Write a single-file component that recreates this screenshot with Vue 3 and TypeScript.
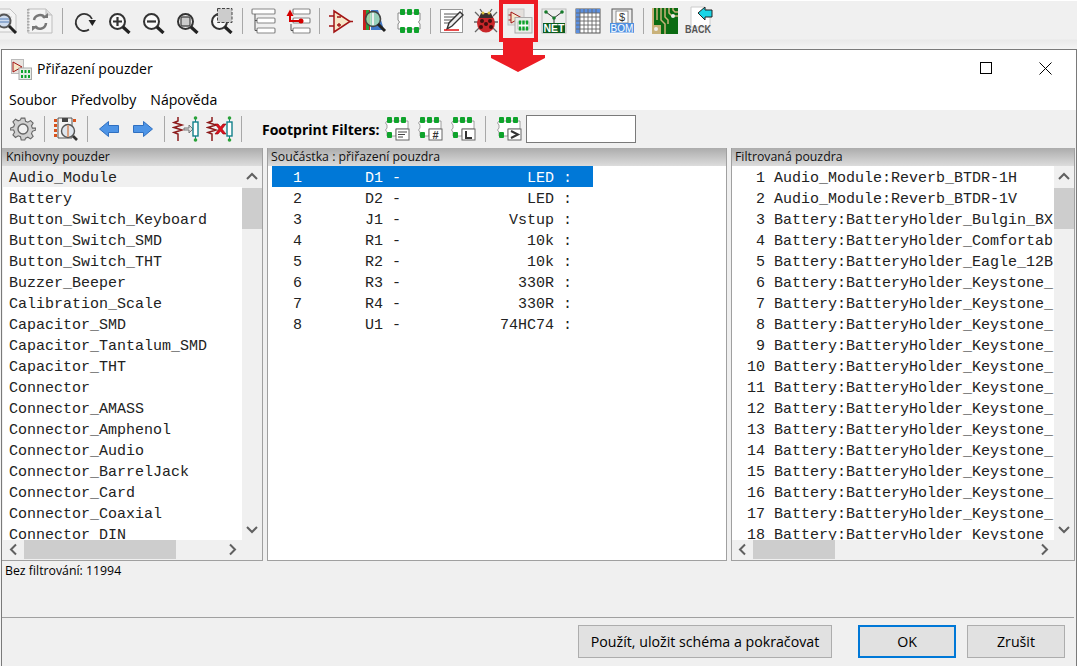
<script setup lang="ts">
const libraries = [
  'Audio_Module', 'Battery', 'Button_Switch_Keyboard', 'Button_Switch_SMD', 'Button_Switch_THT',
  'Buzzer_Beeper', 'Calibration_Scale', 'Capacitor_SMD', 'Capacitor_Tantalum_SMD', 'Capacitor_THT',
  'Connector', 'Connector_AMASS', 'Connector_Amphenol', 'Connector_Audio', 'Connector_BarrelJack',
  'Connector_Card', 'Connector_Coaxial', 'Connector_DIN',
];

const parts = [
  ['D1', 'LED'], ['D2', 'LED'], ['J1', 'Vstup'], ['R1', '10k'],
  ['R2', '10k'], ['R3', '330R'], ['R4', '330R'], ['U1', '74HC74'],
];

const partRows = parts.map(([ref, value], i) =>
  `${String(i + 1).padStart(3)}       ${ref} -${value.padStart(17)} :`);

// seznam je v okne oriznuty, nazvy jsou jen po viditelny sloupec
const footprintNames = [
  'Audio_Module:Reverb_BTDR-1H', 'Audio_Module:Reverb_BTDR-1V',
  'Battery:BatteryHolder_Bulgin_BX', 'Battery:BatteryHolder_Comfortab',
  'Battery:BatteryHolder_Eagle_12B',
  ...Array.from({ length: 13 }, () => 'Battery:BatteryHolder_Keystone_'),
];

const footprintRows = footprintNames.map((name, i) => `${String(i + 1).padStart(3)} ${name}`);
</script>

<template>
  <div class="screen">
    <!-- hlavni lista Eeschema -->
    <div class="main-bar">
      <div class="tool">
        <svg width="26" height="26" viewBox="0 0 26 26"><path d="M2 1h15l6 6v17H2z" fill="#f4f4f4" stroke="#c4c4c4"/><path d="M5 6h12M5 9h14M5 12h14M5 15h14M5 18h14" stroke="#d0d0d0"/><circle cx="11" cy="13" r="6.500" fill="#cfdcee" stroke="#555" stroke-width="2"/><path d="M6 11h10M6 14h10" stroke="#7d9cc8" stroke-width="1.500"/><path d="M16 18l7 7" stroke="#222" stroke-width="3"/></svg>
      </div>
      <div class="tool">
        <svg width="26" height="26" viewBox="0 0 26 26"><path d="M1 1h18l6 6v18H1z" fill="#f4f4f4" stroke="#bdbdbd"/><path d="M1 1v24" stroke="#aaa" stroke-width="3" stroke-dasharray="1.500 1.500"/><path d="M19 1v6h6" fill="#ddd" stroke="#bdbdbd"/><path d="M7 12a6 6 0 0 1 11-2" fill="none" stroke="#777" stroke-width="2.500"/><path d="M15 10h6v-5z" fill="#777"/><path d="M19 15a6 6 0 0 1-11 3" fill="none" stroke="#777" stroke-width="2.500"/><path d="M11 18H5v5z" fill="#777"/></svg>
      </div>
      <div class="sep sep-wide"></div>
      <div class="tool">
        <svg width="26" height="26" viewBox="0 0 26 26"><path d="M17 21.500A8.500 8.500 0 1 1 20 11" fill="none" stroke="#333" stroke-width="1.800"/><path d="M16.500 12h7.500l-3.700 6z" fill="#222"/></svg>
      </div>
      <div class="tool">
        <svg width="26" height="26" viewBox="0 0 26 26"><circle cx="11.500" cy="13.500" r="7.500" fill="#fafafa" stroke="#333" stroke-width="2"/><path d="M7 13.500h9M11.500 9v9" stroke="#333" stroke-width="2.200"/><path d="M17 19l6.500 6" stroke="#222" stroke-width="3.200"/></svg>
      </div>
      <div class="tool">
        <svg width="26" height="26" viewBox="0 0 26 26"><circle cx="11.500" cy="13.500" r="7.500" fill="#fafafa" stroke="#333" stroke-width="2"/><path d="M7 13.500h9" stroke="#333" stroke-width="2.200"/><path d="M17 19l6.500 6" stroke="#222" stroke-width="3.200"/></svg>
      </div>
      <div class="tool">
        <svg width="26" height="26" viewBox="0 0 26 26"><circle cx="11.500" cy="13.500" r="7.500" fill="#f4f4f4" stroke="#333" stroke-width="2"/><rect x="7" y="9" width="9" height="9" rx="1.500" fill="#ccc" stroke="#555" stroke-width="1.400"/><path d="M17 19l6.500 6" stroke="#222" stroke-width="3.200"/></svg>
      </div>
      <div class="tool">
        <svg width="26" height="26" viewBox="0 0 26 26"><circle cx="11.500" cy="13.500" r="7.500" fill="#fafafa" stroke="#333" stroke-width="2"/><rect x="9.500" y=".5" width="14.500" height="14" fill="#ccc" stroke="#444" stroke-dasharray="3 1.500"/><path d="M17 19l6.500 6" stroke="#222" stroke-width="3.200"/></svg>
      </div>
      <div class="sep"></div>
      <div class="tool">
        <svg width="26" height="26" viewBox="0 0 26 26"><g fill="#fff" stroke="#888" stroke-width="1.200"><rect x="1" y="1" width="23" height="5" rx="1"/><rect x="6" y="10" width="18" height="5" rx="1"/><rect x="6" y="20" width="18" height="5" rx="1"/></g><path d="M4 6v16.500h2M4 12.500h2" fill="none" stroke="#555"/></svg>
      </div>
      <div class="tool">
        <svg width="26" height="26" viewBox="0 0 26 26"><g fill="#fff" stroke="#888" stroke-width="1.200"><rect x="8" y="1" width="17" height="5" rx="1"/><rect x="8" y="10" width="17" height="5" rx="1"/><rect x="8" y="20" width="17" height="5" rx="1"/></g><path d="M6 16v6.500h2" fill="none" stroke="#555"/><path d="M5 8v5h11" fill="none" stroke="#d40000" stroke-width="2"/><path d="M1.500 8L5 1.500 8.500 8z" fill="#d40000"/><circle cx="16" cy="13" r="2.500" fill="#d40000"/></svg>
      </div>
      <div class="sep"></div>
      <div class="tool">
        <svg width="26" height="26" viewBox="0 0 26 26"><path d="M6 3l16 10.500L6 24z" fill="#f6e7c8" stroke="#a31515" stroke-width="1.500"/><path d="M1 8h5M1 18h5M22 13.500h3M9 9h4M9 17h4M11 15v4" stroke="#a31515" stroke-width="1.300"/></svg>
      </div>
      <div class="tool">
        <svg width="26" height="26" viewBox="0 0 26 26"><rect x="1" y="2" width="7" height="20" fill="#c8201f"/><rect x="4" y="2" width="3" height="20" fill="#2a9a3a"/><path d="M9 2h7l6 20H9z" fill="#3f78c9"/><circle cx="11" cy="11" r="7.500" fill="#a8e0b8" fill-opacity=".85" stroke="#444" stroke-width="1.600"/><path d="M11 5v12" stroke="#eee" stroke-width="2"/><path d="M16 16l7 7" stroke="#222" stroke-width="3"/></svg>
      </div>
      <div class="tool">
        <svg width="26" height="26" viewBox="0 0 26 26"><path d="M2 5h22v7l-1.500 2 1.500 2v5H2v-5l1.500-2L2 12z" fill="#fff" stroke="#888"/><g fill="#0fa32c"><rect x="4" y="1" width="5" height="6" rx="1"/><rect x="11" y="1" width="5" height="6" rx="1"/><rect x="18" y="1" width="5" height="6" rx="1"/><rect x="4" y="19" width="5" height="6" rx="1"/><rect x="11" y="19" width="5" height="6" rx="1"/><rect x="18" y="19" width="5" height="6" rx="1"/></g></svg>
      </div>
      <div class="sep"></div>
      <div class="tool">
        <svg width="26" height="26" viewBox="0 0 26 26"><rect x="1.500" y="1.500" width="22" height="23" fill="#fff" stroke="#999"/><path d="M5 6h14M5 9h12M5 12h8M5 15h6" stroke="#555"/><path d="M8 21l2-6L21 4l3 3-11 11z" fill="#eee" stroke="#333" stroke-width="1.400"/><path d="M5 22h15" stroke="#e01010" stroke-width="1.500"/></svg>
      </div>
      <div class="tool">
        <svg width="26" height="26" viewBox="0 0 26 26"><path d="M6 8L2 4M5 14H1M6 20l-4 4M20 8l4-4M21 14h4M20 20l4 4M9 4L7 1M17 4l2-3" stroke="#666" stroke-width="1.300"/><ellipse cx="13" cy="15" rx="9" ry="9.500" fill="#c9262a"/><path d="M8 5h10l2 5H6z" fill="#3a3030"/><circle cx="10" cy="5" r="1.500" fill="#d8c040"/><circle cx="16" cy="5" r="1.500" fill="#d8c040"/><g fill="#401010"><circle cx="9" cy="13" r="2"/><circle cx="17" cy="13" r="2"/><circle cx="8" cy="19" r="2"/><circle cx="18" cy="19" r="2"/><circle cx="13" cy="16" r="2"/></g></svg>
      </div>
      <div class="tool">
        <svg width="26" height="26" viewBox="0 0 26 26"><rect x="1" y="1" width="16" height="16" fill="#e4e0dc" stroke="#c4c4c4"/><path d="M4 4l10 5.500L4 15z" fill="#f6e7c8" stroke="#a31515"/><path d="M1.500 7h2.500M1.500 12h2.500" stroke="#a31515"/><rect x="8" y="9.500" width="17" height="15.500" fill="#e8ece8" stroke="#aaa"/><rect x="11" y="14" width="11" height="7" fill="#fff" stroke="#999" stroke-width=".6"/><path d="M13 12.500v4M16.500 12.500v4M20 12.500v4M13 18.500v4M16.500 18.500v4M20 18.500v4" stroke="#0fa32c" stroke-width="2.400"/></svg>
      </div>
      <div class="tool">
        <svg width="26" height="26" viewBox="0 0 26 26"><rect x="1" y="1" width="24" height="24" fill="#eee" stroke="#bbb"/><path d="M5 4l8 6 8-6M13 10v5" fill="none" stroke="#333"/><g fill="#157a2a"><circle cx="5" cy="4" r="1.800"/><circle cx="21" cy="4" r="1.800"/><circle cx="13" cy="10" r="1.800"/></g><rect x="2" y="15" width="22" height="10" fill="#0b5d1e"/><text x="13" y="23.800" class="net-text">NET</text></svg>
      </div>
      <div class="tool">
        <svg width="26" height="26" viewBox="0 0 26 26"><rect x="1" y="1" width="24" height="24" fill="#fff" stroke="#555"/><path d="M1 1h24v4H5v20H1z" fill="#5b8fe0"/><path d="M1 5h24M1 9h24M1 13h24M1 17h24M1 21h24M5 1v24M9 1v24M13 1v24M17 1v24M21 1v24" stroke="#666" stroke-width=".9"/></svg>
      </div>
      <div class="tool">
        <svg width="26" height="26" viewBox="0 0 26 26"><rect x="3" y="1" width="20" height="15" fill="#eee" stroke="#555"/><rect x="7" y="3" width="12" height="12" fill="#fff" stroke="#777" stroke-width=".8"/><text x="13" y="13" class="bom-dollar">$</text><rect x="1" y="15" width="24" height="10" fill="#4f8fe0"/><text x="13" y="23.500" class="bom-text">BOM</text></svg>
      </div>
      <div class="sep"></div>
      <div class="tool">
        <svg width="26" height="26" viewBox="0 0 26 26"><rect width="26" height="26" fill="#0b6b12"/><path d="M0 0h2v26H0zM0 17h9v9H0z" fill="#c9b27a"/><path d="M5 0v12M9 0v12l4 4v10M13 0v9l3 3v4M17 0v5l3 3h6M21 0v2l2 2h3" fill="none" stroke="#c9b27a" stroke-width="1.500"/><circle cx="21" cy="8" r="2" fill="#eee"/><circle cx="4" cy="21" r="2" fill="#eee"/></svg>
      </div>
      <div class="tool">
        <svg width="28" height="30" viewBox="0 0 28 30"><path d="M6 1h13l6 6v14H6z" fill="#fff" stroke="#ccc"/><path d="M13 7l7-6v3h7v7h-7v3z" fill="#19d5e6" stroke="#222"/><text x="13" y="27" textLength="26" lengthAdjust="spacingAndGlyphs" class="back-text">BACK</text></svg>
      </div>
    </div>

    <!-- oznaceni tlacitka a sipka -->
    <div class="highlight"></div>
    <svg class="arrow" width="54" height="30" viewBox="0 0 54 30"><path d="M12 0h30v13h12v3L27 30 0 16v-3h12z" fill="#ed1c24"/></svg>

    <div class="dialog">
      <div class="title-bar">
        <svg class="title-icon" width="21" height="21" viewBox="0 0 21 21"><rect x=".5" y=".5" width="12" height="14" fill="#e8e4e0" stroke="#bbb"/><path d="M2 3l9 5-9 5z" fill="#f6e7c8" stroke="#a31515"/><rect x="8" y="9" width="12.500" height="11.500" fill="#e8ece8" stroke="#aaa"/><path d="M11 11v3M14.500 11v3M18 11v3M11 16v3M14.500 16v3M18 16v3" stroke="#0fa32c" stroke-width="2"/></svg>
        <span class="title-text">Přiřazení pouzder</span>
        <svg class="win-max" width="13" height="13" viewBox="0 0 13 13"><rect x=".5" y=".5" width="11" height="11" fill="none" stroke="#000"/></svg>
        <svg class="win-close" width="13" height="13" viewBox="0 0 13 13"><path d="M.5.500l12 12M12.500.500l-12 12" stroke="#000"/></svg>
      </div>

      <div class="menu-bar">
        <span>Soubor</span>
        <span>Předvolby</span>
        <span>Nápověda</span>
      </div>

      <div class="tool-bar">
        <div class="tool">
          <svg width="26" height="26" viewBox="0 0 26 26"><path d="M11 1h4l.8 3.500 2.500 1 3-1.800 2.800 2.800-1.800 3 1 2.500L27 12v2l-3.700 1.500-1 2.500 1.800 3-2.800 2.800-3-1.800-2.500 1L15 25h-4l-.8-3.500-2.500-1-3 1.800-2.800-2.800 1.800-3-1-2.500L-1 14v-2l3.700-1.500 1-2.500-1.800-3 2.800-2.800 3 1.800 2.500-1z" transform="translate(1.200 1.200) scale(.91)" fill="#d0d0d0" stroke="#666" stroke-width="1.200"/><circle cx="13" cy="13" r="5" fill="#f0f0f0" stroke="#666" stroke-width="1.400"/></svg>
        </div>
        <div class="sep"></div>
        <div class="tool">
          <svg width="26" height="26" viewBox="0 0 26 26"><path d="M5 2h14v20H5z" fill="#f4f4f4" stroke="#555"/><rect x="9" y="2" width="6" height="4" fill="#444"/><g fill="#d9541e"><rect x="1" y="3" width="3" height="3"/><rect x="1" y="8" width="3" height="3"/><rect x="1" y="13" width="3" height="3"/><rect x="1" y="18" width="3" height="3"/><rect x="20" y="3" width="3" height="3"/></g><circle cx="15" cy="15" r="6.500" fill="#dfe6ee" stroke="#555" stroke-width="1.400"/><path d="M15 9v12" stroke="#d9a080" stroke-width="2"/><path d="M20 20l4 4" stroke="#333" stroke-width="2.600"/></svg>
        </div>
        <div class="sep"></div>
        <div class="tool">
          <svg width="20" height="16" viewBox="0 0 20 16"><path d="M.5 8L9.500.5v4h10v7h-10v4z" fill="#4d94e6" stroke="#2f6fc0"/></svg>
        </div>
        <div class="tool">
          <svg width="20" height="16" viewBox="0 0 20 16"><path d="M19.500 8L10.500.5v4H.5v7h10v4z" fill="#4d94e6" stroke="#2f6fc0"/></svg>
        </div>
        <div class="sep"></div>
        <div class="tool">
          <svg width="28" height="26" viewBox="0 0 28 26"><path d="M6 1v4l-4 1.500 8 2.500-8 2.500 8 2.500-8 2.500 4 1.500v7" fill="none" stroke="#8c1c1c" stroke-width="1.500"/><path d="M12 12h5V9l4 4-4 4v-3h-5z" fill="#ddd" stroke="#777"/><rect x="21" y="6" width="5" height="14" fill="#fff" stroke="#12808a" stroke-width="1.400"/><path d="M23.500 2v4M23.500 20v4" stroke="#12808a"/><circle cx="23.500" cy="2" r="1.800" fill="#2aa23a"/><circle cx="23.500" cy="24" r="1.800" fill="#2aa23a"/></svg>
        </div>
        <div class="tool">
          <svg width="28" height="26" viewBox="0 0 28 26"><path d="M6 1v4l-4 1.500 8 2.500-8 2.500 8 2.500-8 2.500 4 1.500v7" fill="none" stroke="#8c1c1c" stroke-width="1.500"/><path d="M9 8h3l2.500 3 2.500-3h3l-4 5 4 5h-3l-2.500-3-2.500 3H9l4-5z" fill="#e01020" stroke="#800" stroke-width=".6"/><rect x="21" y="6" width="5" height="14" fill="#fff" stroke="#12808a" stroke-width="1.400"/><path d="M23.500 2v4M23.500 20v4" stroke="#12808a"/><circle cx="23.500" cy="2" r="1.800" fill="#2aa23a"/><circle cx="23.500" cy="24" r="1.800" fill="#2aa23a"/></svg>
        </div>
        <div class="sep"></div>
        <span class="filters-label">Footprint Filters:</span>

        <div class="filter">
          <svg width="26" height="24" viewBox="0 0 26 24"><use href="#fp-base"/><rect x="12" y="12" width="13" height="11" fill="#fff" stroke="#666"/><path d="M14 15h9M14 17.500h7M14 20h5" stroke="#444"/></svg>
        </div>
        <div class="filter">
          <svg width="26" height="24" viewBox="0 0 26 24"><use href="#fp-base"/><rect x="12" y="12" width="13" height="11" fill="#fff" stroke="#666"/><text x="18.500" y="21.500" class="fp-text">#</text></svg>
        </div>
        <div class="filter">
          <svg width="26" height="24" viewBox="0 0 26 24"><use href="#fp-base"/><rect x="12" y="12" width="13" height="11" fill="#fff" stroke="#666"/><path d="M16 14v7h6" fill="none" stroke="#333" stroke-width="2"/></svg>
        </div>
        <div class="sep filter-sep"></div>
        <div class="filter">
          <svg width="26" height="24" viewBox="0 0 26 24"><use href="#fp-base"/><rect x="12" y="12" width="13" height="11" fill="#fff" stroke="#666"/><path d="M15 14l7 3.500-7 3.500" fill="none" stroke="#333" stroke-width="2"/></svg>
        </div>
        <input class="filter-input" type="text" />

        <svg class="defs" width="0" height="0"><defs><g id="fp-base"><path d="M3 4h21v8H12v7H3v-4l-1.500-2L3 11V8L1.500 6z" fill="#fff" stroke="#888" stroke-width=".8"/><g fill="#0fa32c"><rect x="3" y="0" width="5" height="6" rx="1"/><rect x="10" y="0" width="5" height="6" rx="1"/><rect x="17" y="0" width="5" height="6" rx="1"/><rect x="3" y="15" width="5" height="6" rx="1"/></g></g></defs></svg>
      </div>

      <div class="panels">
        <section class="panel panel-libs">
          <div class="panel-head">Knihovny pouzder</div>
          <div class="panel-body">
            <ul class="list">
              <li v-for="(lib, i) in libraries" :key="lib" class="row" :class="{ 'row-current': i === 0 }">{{ lib }}</li>
            </ul>
            <div class="vbar">
              <svg class="chev" width="20" height="22" viewBox="0 0 20 22"><path d="M5 13l5-5 5 5" fill="none" stroke="#606060" stroke-width="2"/></svg>
              <div class="vthumb"></div>
              <svg class="chev vchev-end" width="20" height="22" viewBox="0 0 20 22"><path d="M5 9l5 5 5-5" fill="none" stroke="#606060" stroke-width="2"/></svg>
            </div>
          </div>
          <div class="hbar">
            <svg class="chev" width="21" height="19" viewBox="0 0 21 19"><path d="M13 4.500l-5 5 5 5" fill="none" stroke="#606060" stroke-width="2"/></svg>
            <div class="hthumb hthumb-libs"></div>
            <svg class="chev hchev-end" width="21" height="19" viewBox="0 0 21 19"><path d="M8 4.500l5 5-5 5" fill="none" stroke="#606060" stroke-width="2"/></svg>
          </div>
        </section>

        <section class="panel panel-parts">
          <div class="panel-head">Součástka : přiřazení pouzdra</div>
          <ul class="list list-parts">
            <li v-for="(text, i) in partRows" :key="text" class="row part-row" :class="{ 'row-selected': i === 0 }">{{ text }}</li>
          </ul>
        </section>

        <section class="panel panel-prints">
          <div class="panel-head">Filtrovaná pouzdra</div>
          <div class="panel-body">
            <ul class="list">
              <li v-for="text in footprintRows" :key="text" class="row">{{ text }}</li>
            </ul>
            <div class="vbar">
              <svg class="chev" width="20" height="22" viewBox="0 0 20 22"><path d="M5 13l5-5 5 5" fill="none" stroke="#606060" stroke-width="2"/></svg>
              <div class="vthumb"></div>
              <svg class="chev vchev-end" width="20" height="22" viewBox="0 0 20 22"><path d="M5 9l5 5 5-5" fill="none" stroke="#606060" stroke-width="2"/></svg>
            </div>
          </div>
          <div class="hbar">
            <svg class="chev" width="21" height="19" viewBox="0 0 21 19"><path d="M13 4.500l-5 5 5 5" fill="none" stroke="#606060" stroke-width="2"/></svg>
            <div class="hthumb hthumb-prints"></div>
            <svg class="chev hchev-end" width="21" height="19" viewBox="0 0 21 19"><path d="M8 4.500l5 5-5 5" fill="none" stroke="#606060" stroke-width="2"/></svg>
          </div>
        </section>
      </div>

      <div class="status">Bez filtrování: 11994</div>

      <div class="footer">
        <button class="btn btn-apply">Použít, uložit schéma a pokračovat</button>
        <button class="btn btn-ok">OK</button>
        <button class="btn btn-cancel">Zrušit</button>
      </div>
    </div>
  </div>
</template>

<style>
html, body {
  margin: 0;
  overflow: hidden;
}
</style>

<style scoped>
.screen {
  position: relative;
  width: 1077px;
  height: 666px;
  overflow: hidden;
  background: linear-gradient(#fff 1px, #f0f0f0 1px, #f0f0f0 39px, #e9e9e9 40px, #f4f4f4 49px);
  font-family: "Open Sans", "Noto Sans", sans-serif;
  color: #000;
}

.main-bar {
  display: flex;
  align-items: center;
  height: 40px;
  margin-top: 1px;
  margin-left: -11px;
}

.tool {
  flex: none;
  width: 34px;
  height: 34px;
  display: flex;
  align-items: center;
  justify-content: center;
}

.sep {
  flex: none;
  width: 1px;
  height: 26px;
  margin: 0 4px;
  background: #a8a8a8;
}

.sep-wide {
  margin: 0 5px;
}

.net-text, .bom-text, .back-text, .bom-dollar, .fp-text {
  font-family: "Liberation Sans", sans-serif;
  font-weight: bold;
  text-anchor: middle;
}
.net-text { font-size: 10.500px; fill: #fff; }
.bom-text { font-size: 10px; fill: #fff; font-weight: normal; text-decoration: underline; }
.bom-dollar { font-size: 11px; fill: #333; font-weight: normal; }
.back-text { font-size: 10.500px; fill: #555; }
.fp-text { font-size: 11px; fill: #333; }

.highlight {
  position: absolute;
  left: 499px;
  top: 0;
  width: 31px;
  height: 34px;
  border: 4px solid #ed1c24;
}

.arrow {
  position: absolute;
  left: 491px;
  top: 42px;
  z-index: 2;
}

.dialog {
  display: flex;
  flex-direction: column;
  height: 616px;
  margin: 8px 0 0 1px;
  border: 1px solid #7a7a7a;
  background: #f0f0f0;
}

.title-bar {
  flex: none;
  position: relative;
  height: 38px;
  display: flex;
  align-items: center;
  background: #fff;
  padding-left: 9px;
}

.title-text {
  margin-left: 5px;
  margin-top: -2px;
  font-size: 14px;
}

.win-max {
  position: absolute;
  left: 978px;
  top: 12px;
}

.win-close {
  position: absolute;
  left: 1037px;
  top: 12px;
}

.menu-bar {
  flex: none;
  height: 22px;
  display: flex;
  align-items: center;
  gap: 14px;
  padding-left: 7px;
  background: #fff;
  font-size: 14.100px;
}

.tool-bar {
  flex: none;
  height: 38px;
  display: flex;
  align-items: center;
  padding-left: 4px;
}

.filters-label {
  margin-left: 16px;
  margin-right: 1.500px;
  font-size: 14px;
  font-weight: bold;
  white-space: nowrap;
}

.filter {
  flex: none;
  width: 33px;
  display: flex;
  justify-content: center;
}

.filter-sep {
  margin: 0 7px 0 5px;
}

.filter-input {
  width: 104px;
  height: 24px;
  margin-left: 0;
  padding: 1px 2px;
  border: 1px solid #7a7a7a;
  background: #fff;
}

.defs {
  position: absolute;
}

.panels {
  flex: none;
  height: 413px;
  display: flex;
  gap: 4px;
}

.panel {
  flex: none;
  display: flex;
  flex-direction: column;
  min-width: 0;
  border-right: 1px solid #a0a0a0;
  border-bottom: 1px solid #a0a0a0;
  box-sizing: border-box;
}

.panel-libs { width: 261px; }
.panel-parts { width: 460px; border-left: 1px solid #a0a0a0; }
.panel-prints { width: 344px; border-left: 1px solid #a0a0a0; }

.panel-head {
  flex: none;
  height: 18px;
  line-height: 17px;
  padding-left: 4px;
  background: linear-gradient(#acacac, #dcdcdc);
  font-size: 12.300px;
  color: #111;
  white-space: nowrap;
}

.panel-parts .panel-head,
.panel-prints .panel-head {
  padding-left: 3px;
}

.panel-body {
  flex: none;
  height: 374px;
  display: flex;
}

.list {
  flex: 1;
  min-width: 0;
  margin: 0;
  padding: 0;
  list-style: none;
  overflow: hidden;
  background: #fff;
  font-family: "Liberation Mono", monospace;
  font-size: 15px;
  color: #222;
}

.panel-libs .list { margin-left: 1px; }

.row {
  height: 21px;
  line-height: 25px;
  padding-left: 6px;
  white-space: pre;
}

.row-current { background: #f0f0f0; }

.part-row {
  width: 318px;
  margin-left: 4px;
  padding-left: 3px;
}

.row-selected {
  background: #0078d7;
  color: #fff;
}

.vbar {
  flex: none;
  width: 20px;
  display: flex;
  flex-direction: column;
  background: #f0f0f0;
}

.vthumb {
  height: 41px;
  background: #cdcdcd;
}

.chev {
  flex: none;
  display: block;
}

.vchev-end {
  margin-top: auto;
}

.hchev-end {
  margin-left: auto;
}

.hbar {
  flex: none;
  height: 20px;
  display: flex;
  background: #f0f0f0;
  margin-right: 19px;
}

.hthumb {
  height: 19px;
  background: #cdcdcd;
}

.panel-libs .hbar { margin-left: 1px; }

.hthumb-libs { width: 152px; }
.hthumb-prints { width: 82px; }

.status {
  flex: none;
  height: 57px;
  padding: 1px 0 0 3px;
  box-sizing: border-box;
  font-size: 12.300px;
  border-bottom: 1px solid #a0a0a0;
  margin-right: 2px;
}

.footer {
  flex: 1;
  display: flex;
  align-items: flex-start;
  padding-top: 7px;
}

.btn {
  height: 33px;
  padding: 0;
  border: 1px solid #adadad;
  background: #e1e1e1;
  color: #000;
  font-family: inherit;
  font-size: 14.200px;
  box-sizing: border-box;
}

.btn-apply {
  width: 254px;
  margin-left: 576px;
}

.btn-ok {
  width: 98px;
  margin-left: 26px;
  border: 2px solid #0078d7;
}

.btn-cancel {
  width: 98px;
  margin-left: 11px;
}
</style>
